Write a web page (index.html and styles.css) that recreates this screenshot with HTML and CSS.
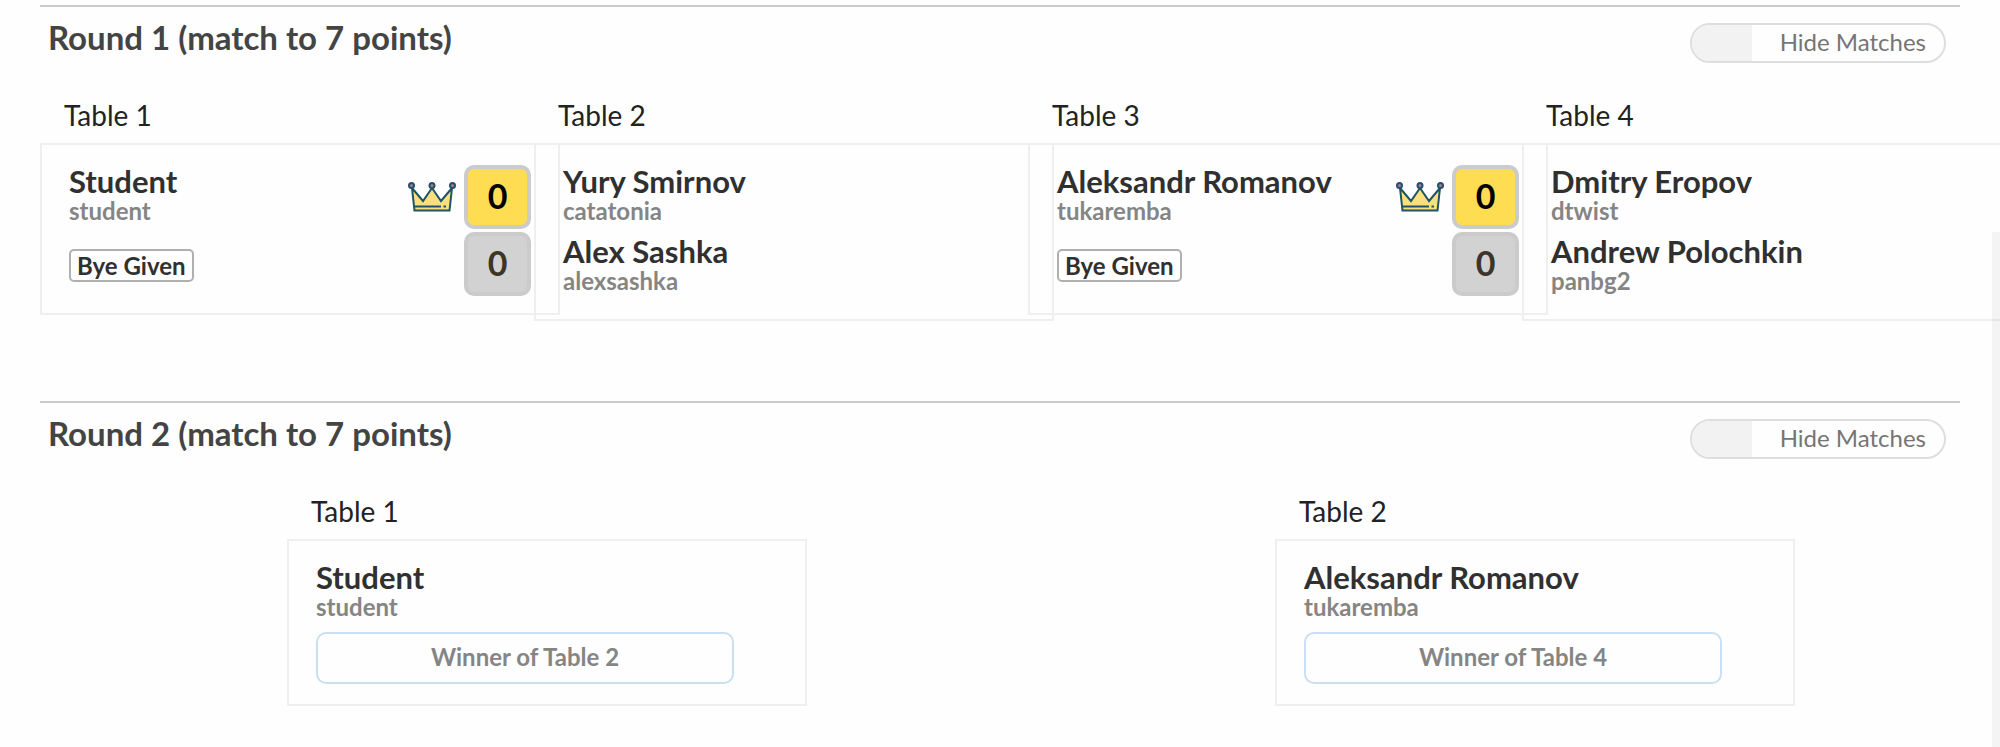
FILE: index.html
```html
<!DOCTYPE html>
<html lang="en">
<head>
<meta charset="UTF-8">
<title>Tournament Bracket</title>
<link rel="stylesheet" href="styles.css">
</head>
<body>

<!-- crown shown next to the winner's score -->
<svg class="sprite" aria-hidden="true">
  <symbol id="crown" viewBox="0 0 48 30">
    <path d="M3 5 L7 28.500 H41 L45 5 L33 19 L24 5 L15 19 Z" fill="#fbdf7e"/>
    <path d="M4 6 L6.500 28.500 H41.500 L44 6 L33 19 L24 6 L15 19 Z" fill="none" stroke="#1d5566" stroke-width="2"/>
    <path d="M7 24.500 H33 M35.500 24.500 H38" fill="none" stroke="#1d5566" stroke-width="2"/>
    <g fill="#a67c94" stroke="#24506b" stroke-width="2">
      <circle cx="3.500" cy="3.500" r="2.500"/>
      <circle cx="24" cy="3.500" r="2.500"/>
      <circle cx="44.500" cy="3.500" r="2.500"/>
    </g>
  </symbol>
</svg>

<main class="bracket">
  <section class="round">
    <header class="round-header">
      <h2>Round 1 (match to 7 points)</h2>
      <label class="toggle"><input type="checkbox">Hide Matches</label>
    </header>
    <div class="tables">
      <div class="table">
        <h3>Table 1</h3>
        <div class="match">
          <div class="players">
            <div class="player"><div class="name">Student</div><div class="user">student</div></div>
            <div class="bye">Bye Given</div>
          </div>
          <svg class="crown"><use href="#crown"/></svg>
          <div class="scores">
            <div class="score win">0</div>
            <div class="score">0</div>
          </div>
        </div>
      </div>
      <div class="table">
        <h3>Table 2</h3>
        <div class="match">
          <div class="players">
            <div class="player"><div class="name">Yury Smirnov</div><div class="user">catatonia</div></div>
            <div class="player"><div class="name">Alex Sashka</div><div class="user">alexsashka</div></div>
          </div>
        </div>
      </div>
      <div class="table">
        <h3>Table 3</h3>
        <div class="match">
          <div class="players">
            <div class="player"><div class="name">Aleksandr Romanov</div><div class="user">tukaremba</div></div>
            <div class="bye">Bye Given</div>
          </div>
          <svg class="crown"><use href="#crown"/></svg>
          <div class="scores">
            <div class="score win">0</div>
            <div class="score">0</div>
          </div>
        </div>
      </div>
      <div class="table">
        <h3>Table 4</h3>
        <div class="match">
          <div class="players">
            <div class="player"><div class="name">Dmitry Eropov</div><div class="user">dtwist</div></div>
            <div class="player"><div class="name">Andrew Polochkin</div><div class="user">panbg2</div></div>
          </div>
        </div>
      </div>
    </div>
  </section>

  <section class="round">
    <header class="round-header">
      <h2>Round 2 (match to 7 points)</h2>
      <label class="toggle"><input type="checkbox">Hide Matches</label>
    </header>
    <div class="tables">
      <div class="table">
        <h3>Table 1</h3>
        <div class="match">
          <div class="players">
            <div class="player"><div class="name">Student</div><div class="user">student</div></div>
            <div class="pending">Winner of Table 2</div>
          </div>
        </div>
      </div>
      <div class="table">
        <h3>Table 2</h3>
        <div class="match">
          <div class="players">
            <div class="player"><div class="name">Aleksandr Romanov</div><div class="user">tukaremba</div></div>
            <div class="pending">Winner of Table 4</div>
          </div>
        </div>
      </div>
    </div>
  </section>
</main>

<div class="scroll-track"></div>

</body>
</html>
```
FILE: styles.css
```css
* {
  box-sizing: border-box;
}

body {
  margin: 0;
  background: #fefefe;
  color: #303030;
  font-family: Lato, sans-serif;
  overflow: hidden;
}

h2, h3 {
  margin: 0;
}

.sprite {
  display: none;
}

.bracket {
  padding: 5px 40px 0;
}

.round {
  border-top: 2px solid #cbcbcb;
  padding-bottom: 80px;
}

.round:last-child {
  padding-bottom: 40px;
}

.round-header {
  display: flex;
  justify-content: space-between;
  align-items: flex-start;
  padding: 10px 14px 0 8px;
}

.round-header h2 {
  color: #444;
  font-size: 33px;
  line-height: 41px;
}

.toggle {
  position: relative;
  width: 256px;
  height: 40px;
  margin-top: 6px;
  padding-right: 18px;
  border: 2px solid #dedede;
  border-radius: 20px;
  overflow: hidden;
  color: #757575;
  font-size: 24px;
  line-height: 34px;
  text-align: right;
  cursor: pointer;
}

/* grey part on the left of the switch */
.toggle input {
  appearance: none;
  position: absolute;
  left: 0;
  top: 0;
  width: 60px;
  height: 36px;
  margin: 0;
  background: #f2f2f2;
  cursor: pointer;
}

/* columns run a little past the right edge of the round */
.tables {
  display: flex;
  justify-content: space-around;
  align-items: flex-start;
  margin-right: -56px;
  padding-top: 35px;
}

.table {
  width: 25%;
}

.table h3 {
  padding: 0 0 11px 24px;
  color: #222;
  font-size: 28px;
  font-weight: 400;
  line-height: 34px;
}

.match {
  display: flex;
  align-items: flex-start;
  margin-right: -26px;
  padding: 17px 27px;
  border: 2px solid #efefef;
}

.players {
  flex: 1;
  padding-right: 44px;
}

.player {
  padding: 2px 0 8px;
  white-space: nowrap;
}

.name {
  font-size: 31px;
  font-weight: 700;
  line-height: 34px;
}

.user {
  color: #858585;
  font-size: 24px;
  font-weight: 700;
  line-height: 26px;
}

.bye {
  width: max-content;
  margin-top: 17px;
  padding: 0 6px;
  border: 2px solid #b0b0b0;
  border-radius: 5px;
  font-size: 24px;
  font-weight: 700;
  line-height: 29px;
}

.pending {
  margin: 4px 0 3px;
  padding-bottom: 2px;
  border: 2px solid #cbdff2;
  border-radius: 10px;
  color: #858585;
  font-size: 24px;
  font-weight: 700;
  line-height: 46px;
  text-align: center;
}

.crown {
  width: 48px;
  height: 30px;
  margin: 20px 8px 0 0;
}

.scores {
  display: flex;
  flex-direction: column;
  gap: 3px;
  padding-top: 3px;
}

.score {
  width: 67px;
  height: 64px;
  border: 4px solid #cbcbcb;
  border-radius: 10px;
  background: #d2d2d2;
  color: #3c3528;
  font-size: 34px;
  font-weight: 700;
  line-height: 54px;
  text-align: center;
}

.score.win {
  background: #ffdd53;
  color: #000;
}

.scroll-track {
  position: fixed;
  top: 232px;
  right: 0;
  bottom: 0;
  width: 8px;
  background: rgba(0, 0, 0, 0.04);
}
```
